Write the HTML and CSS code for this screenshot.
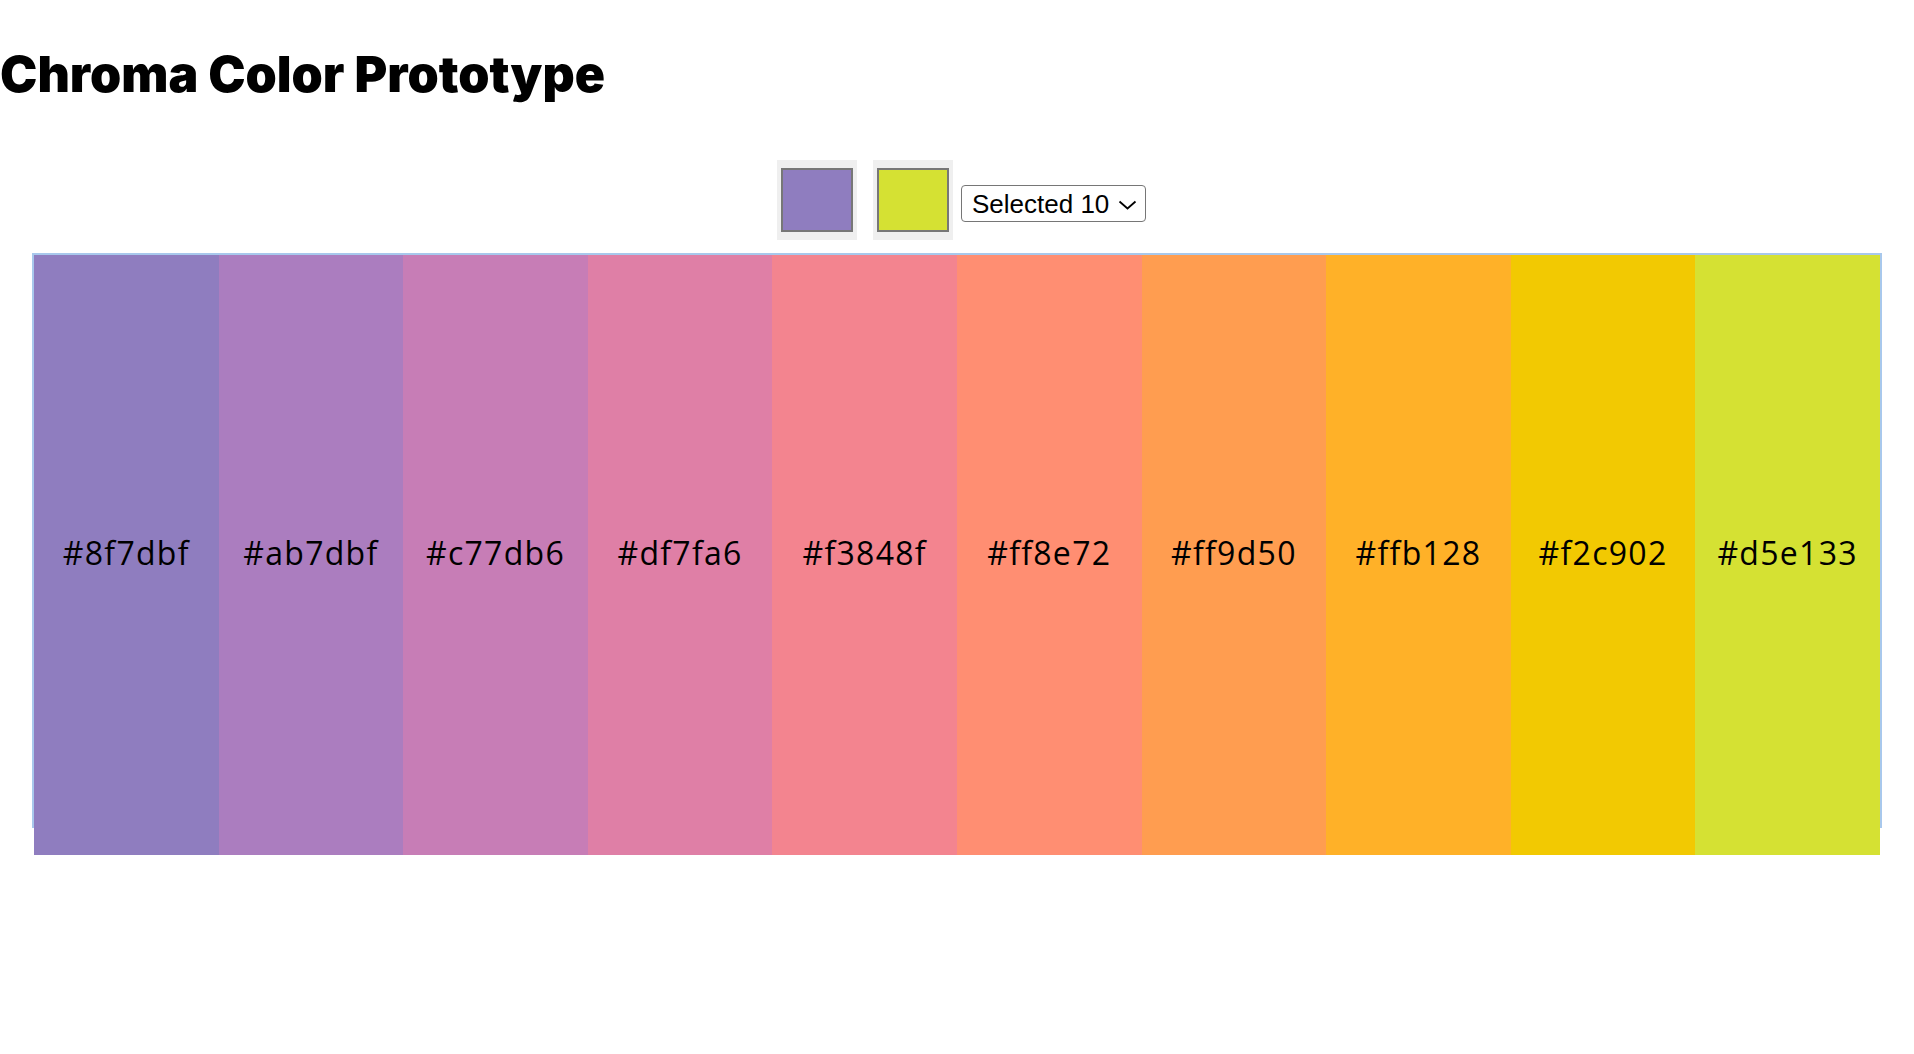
FILE: index.html
```html
<!DOCTYPE html>
<html lang="en">
<head>
<meta charset="utf-8">
<title>Chroma Color Prototype</title>
<link rel="stylesheet" href="styles.css">
</head>
<body>
<h1 class="title">Chroma Color Prototype</h1>
<div class="controls">
  <div class="picker"><div class="chip" style="background:#8f7dbf"></div></div>
  <div class="picker"><div class="chip" style="background:#d5e133"></div></div>
  <div class="select">
    <span class="select-text">Selected 10</span>
    <svg class="chev" width="19" height="10" viewBox="0 0 19 10"><path d="M1.5 1.5 L9.5 8.5 L17.5 1.5" fill="none" stroke="#000" stroke-width="1.8"/></svg>
  </div>
</div>
<div class="palette">
  <div class="strips">
    <div class="strip" style="background:#8f7dbf">#8f7dbf</div>
    <div class="strip" style="background:#ab7dbf">#ab7dbf</div>
    <div class="strip" style="background:#c77db6">#c77db6</div>
    <div class="strip" style="background:#df7fa6">#df7fa6</div>
    <div class="strip" style="background:#f3848f">#f3848f</div>
    <div class="strip" style="background:#ff8e72">#ff8e72</div>
    <div class="strip" style="background:#ff9d50">#ff9d50</div>
    <div class="strip" style="background:#ffb128">#ffb128</div>
    <div class="strip" style="background:#f2c902">#f2c902</div>
    <div class="strip" style="background:#d5e133">#d5e133</div>
  </div>
</div>
</body>
</html>
```

FILE: styles.css
```css
html, body {
  margin: 0;
  padding: 0;
  background: #fff;
}
body {
  font-family: "Liberation Sans", Arial, sans-serif;
  color: #000;
}
.title {
  margin: 44px 0 0 0;
  font-family: Inter, "Noto Sans", sans-serif;
  font-weight: 900;
  font-size: 50px;
  line-height: 60px;
  letter-spacing: 0;
}
.controls {
  display: flex;
  justify-content: center;
  align-items: flex-start;
  margin-top: 56px;
  padding-left: 9px;
}
.picker {
  width: 80px;
  height: 80px;
  box-sizing: border-box;
  padding: 8px 4px;
  background: #efefef;
  margin-right: 16px;
}
.picker + .picker {
  margin-right: 8px;
}
.chip {
  width: 100%;
  height: 100%;
  box-sizing: border-box;
  border: 2px solid #777;
}
.select {
  margin-top: 25px;
  width: 185px;
  height: 37px;
  box-sizing: border-box;
  border: 1px solid #767676;
  border-radius: 4px;
  background: #fff;
  display: flex;
  align-items: center;
  justify-content: space-between;
  padding: 0 8px 0 10px;
  font-family: "Liberation Sans", Arial, sans-serif;
  font-size: 26px;
}
.select-text {
  line-height: 1;
}
.chev {
  display: block;
  margin-top: 2px;
}
.palette {
  margin: 13px 32px 0 32px;
  padding: 2px 2px 0 2px;
  background: linear-gradient(#a8c8ec, #a8c8ec) top left / 100% 575px no-repeat;
}
.strips {
  display: flex;
  height: 600px;
}
.strip {
  flex: 1 1 0;
  display: flex;
  align-items: center;
  justify-content: center;
  padding-bottom: 5px;
  font-family: "Open Sans", "Noto Sans", sans-serif;
  font-size: 32px;
  letter-spacing: 1.3px;
  color: #000;
}
```
